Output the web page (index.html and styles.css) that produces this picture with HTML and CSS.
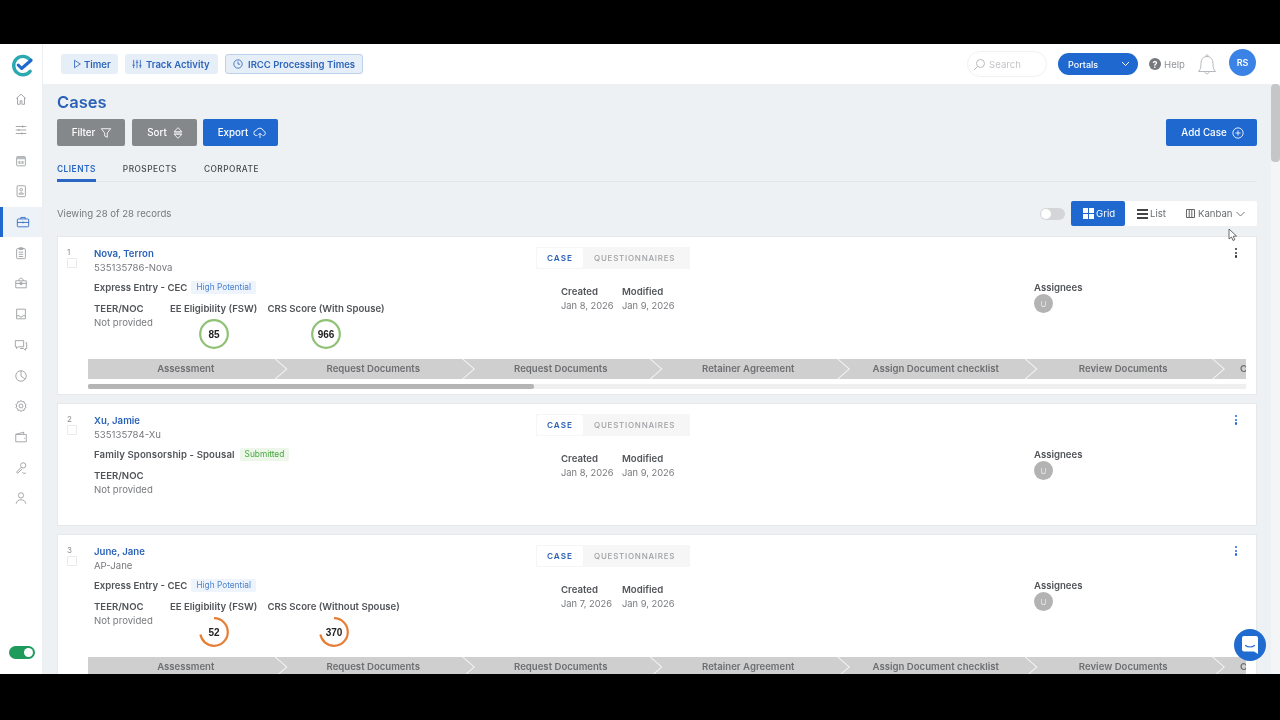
FILE: index.html
```html
<!DOCTYPE html>
<html lang="en">
<head>
<meta charset="utf-8">
<title>Cases</title>
<link rel="stylesheet" href="styles.css">
</head>
<body>
<div class="app">
  <aside class="sidebar">
    <div class="logo">
      <svg width="23" height="23" viewBox="0 0 24 24" fill="none"><path d="M19.5 5.600A9.600 9.600 0 1 0 20 18" stroke="#2aa9b0" stroke-width="3.600" stroke-linecap="round"/><path d="M7.500 11.500l3.600 3.600L21 6.500" stroke="#1f68d0" stroke-width="3.200" stroke-linecap="round" stroke-linejoin="round"/></svg>
    </div>
    <nav class="nav">
      <a class="nav-item"><svg viewBox="0 0 16 16"><path d="M2.500 7.500L8 2.500l5.500 5M4 6.500V14h3v-4h2v4h3V6.500"/></svg></a>
      <a class="nav-item"><svg viewBox="0 0 16 16"><path d="M2 4h12M2 8h12M2 12h12M10 2.800v2.400M5.500 6.800v2.400M9 10.800v2.400"/></svg></a>
      <a class="nav-item"><svg viewBox="0 0 16 16"><rect x="3" y="3" width="10" height="10.500" rx="1"/><path class="fill" d="M3 3h10v3H3zM5 8h2.500v3.500H5zM8.500 8H11v3.500H8.500z"/></svg></a>
      <a class="nav-item"><svg viewBox="0 0 16 16"><rect x="3.500" y="2" width="9.500" height="12.500" rx="1"/><circle cx="8.200" cy="6.500" r="1.500"/><path d="M5.500 11.500c.4-2 5-2 5.400 0z"/></svg></a>
      <a class="nav-item active"><svg viewBox="0 0 16 16"><rect x="1.500" y="4.500" width="13" height="9" rx="1"/><path d="M5.500 4.500V2.800h5v1.700M1.500 8.500h13M8 7.500v2"/></svg></a>
      <a class="nav-item"><svg viewBox="0 0 16 16"><rect x="3" y="3" width="10" height="11.500" rx="1"/><path d="M6 2h4v2H6zM5.500 7h5M5.500 9.500h5M5.500 12h5"/></svg></a>
      <a class="nav-item"><svg viewBox="0 0 16 16"><path d="M2 5.500h12v8H2zM5.500 5.500c0-4 5-4 5 0M2 8.500h12"/><circle cx="8" cy="8.500" r="1.500"/></svg></a>
      <a class="nav-item"><svg viewBox="0 0 16 16"><path d="M3 2.500h10v11H3zM3 10h3l1 1.500h2l1-1.500h3"/></svg></a>
      <a class="nav-item"><svg viewBox="0 0 16 16"><path d="M1.500 3h9.500v7H5l-2 2v-2H1.500zM13 5.500h1.500V12H13v2l-2-2H7"/></svg></a>
      <a class="nav-item"><svg viewBox="0 0 16 16"><circle cx="8" cy="8" r="6"/><path d="M8 2v6l4.500 3.500"/></svg></a>
      <a class="nav-item"><svg viewBox="0 0 16 16"><path d="M8 1.500l1.300 1.800 2.200-.4.400 2.200 2 1.100L12.800 8l1.100 1.800-2 1.100-.4 2.200-2.200-.4L8 14.500l-1.300-1.800-2.200.4-.4-2.200-2-1.100L3.200 8 2.100 6.200l2-1.100.4-2.200 2.200.4z"/><circle cx="8" cy="8" r="2.200"/></svg></a>
      <a class="nav-item"><svg viewBox="0 0 16 16"><path d="M2 5l9-2.500V5M2 5h12v8.500H2zM11.500 9.500h1"/></svg></a>
      <a class="nav-item"><svg viewBox="0 0 16 16"><circle cx="10.500" cy="5" r="3"/><path d="M8.500 7L3 12.500 4 14l5.500-5M9.500 13c1 1.500 3 1.500 4 .5"/></svg></a>
      <a class="nav-item"><svg viewBox="0 0 16 16"><circle cx="8" cy="5" r="3"/><path d="M2.500 14.500c.5-6 10.500-6 11 0"/></svg></a>
    </nav>
    <div class="side-toggle"><span class="side-knob"></span></div>
  </aside>
  <div class="workspace">
    <header class="topbar">
      <div class="quick">
        <a class="quick-btn timer"><svg class="qi" viewBox="0 0 12 12"><path d="M3 1.500v9l7-4.500z"/></svg>Timer</a>
        <a class="quick-btn track"><svg class="qi" viewBox="0 0 12 12"><path d="M2 1v10M6 1v10M10 1v10M.5 7.500h3M4.500 4h3M8.500 8h3"/></svg>Track Activity</a>
        <a class="quick-btn outlined"><svg class="qi" viewBox="0 0 12 12"><circle cx="6" cy="6" r="5"/><path d="M6 3v3.200h2.500"/></svg>IRCC Processing Times</a>
      </div>
      <div class="top-right">
        <div class="search"><svg width="13" height="13" viewBox="0 0 13 13" fill="none" stroke="#bbb"><circle cx="7.500" cy="5.500" r="4"/><path d="M4.500 8.500L1 12"/></svg><span>Search</span></div>
        <div class="portals"><span>Portals</span><svg width="9" height="6" viewBox="0 0 9 6" fill="none" stroke="#fff"><path d="M1 1l3.500 3.500L8 1"/></svg></div>
        <div class="help"><span class="help-icon">?</span>Help</div>
        <svg class="bell" width="20" height="24" viewBox="0 0 20 24" fill="none" stroke="#b5b8bc"><path d="M1.500 19.500c2-2 2.500-4 2.500-8C4 7 6.500 4.500 10 4.500s6 2.500 6 7c0 4 .5 6 2.500 8zM8.500 4.500c0-2 3-2 3 0M8 19.500c0 3 4 3 4 0"/></svg>
        <div class="avatar">RS</div>
      </div>
    </header>
    <div class="body-row">
      <main class="content">
        <h1 class="title">Cases</h1>
        <div class="toolbar">
          <a class="btn grey filter">Filter<svg viewBox="0 0 14 14"><path d="M1.500 2h11L8.500 7v5l-3-1.500V7z"/></svg></a>
          <a class="btn grey sort">Sort<svg viewBox="0 0 14 14"><path d="M7 .800L2.500 5.500h9zM7 13.200L2.500 8.500h9zM2.500 7h9"/></svg></a>
          <a class="btn blue export">Export<svg class="wide" viewBox="0 0 16 14"><path d="M5 10H4a3 3 0 0 1-.4-6A4.500 4.500 0 0 1 12 4.500 2.800 2.800 0 0 1 12 10h-1M8 13V7.500M5.800 9.500L8 7.300l2.200 2.200"/></svg></a>
          <a class="btn blue add">Add Case<svg viewBox="0 0 14 14"><circle cx="7" cy="7" r="6"/><path d="M7 4v6M4 7h6"/></svg></a>
        </div>
        <div class="tabs">
          <a class="tab current">CLIENTS</a>
          <a class="tab">PROSPECTS</a>
          <a class="tab">CORPORATE</a>
        </div>
        <div class="records">
          <span class="count">Viewing 28 of 28 records</span>
          <div class="switch"><span class="switch-knob"></span></div>
          <div class="views">
            <a class="view on"><svg width="11" height="11" viewBox="0 0 11 11" fill="#fff"><path d="M0 0h5v5H0zM6 0h5v5H6zM0 6h5v5H0zM6 6h5v5H6z"/></svg>Grid</a>
            <a class="view list"><svg width="11" height="10" viewBox="0 0 11 10" fill="#444"><path d="M0 0h11v2H0zM0 4h11v2H0zM0 8h11v2H0z"/></svg>List</a>
            <a class="view kanban"><svg width="9" height="9" viewBox="0 0 9 9" fill="none" stroke="#666"><path d="M.5.500h8v8h-8zM3.200.500v8M5.800.500v8"/></svg>Kanban<svg width="9" height="6" viewBox="0 0 9 6" fill="none" stroke="#777"><path d="M.5 1l4 4 4-4"/></svg></a>
          </div>
        </div>

        <article class="card">
          <div class="index"><span>1</span><i class="check"></i></div>
          <div class="card-body">
            <div class="card-top">
              <div class="person">
                <a class="name">Nova, Terron</a>
                <div class="ref">535135786-Nova</div>
                <div class="program"><b>Express Entry - CEC</b><span class="pill info">High Potential</span></div>
                <div class="metrics">
                  <div class="metric teer"><b>TEER/NOC</b><span>Not provided</span></div>
                  <div class="metric"><b>EE Eligibility (FSW)</b><svg class="ring" viewBox="0 0 30 30"><circle class="good" cx="15" cy="15" r="13.800"/><text x="15" y="18.500">85</text></svg></div>
                  <div class="metric"><b>CRS Score (With Spouse)</b><svg class="ring" viewBox="0 0 30 30"><circle class="good" cx="15" cy="15" r="13.800"/><text x="15" y="18.500">966</text></svg></div>
                </div>
              </div>
              <div class="meta">
                <div class="switcher"><span class="chip">CASE</span><span class="chip-off">QUESTIONNAIRES</span></div>
                <div class="dates"><div class="date"><b>Created</b><span>Jan 8, 2026</span></div><div class="date"><b>Modified</b><span>Jan 9, 2026</span></div></div>
              </div>
              <div class="assign"><b>Assignees</b><span class="user">U</span></div>
              <div class="menu dark"><i></i><i></i><i></i></div>
            </div>
            <div class="stages">
              <div class="stage">Assessment</div><div class="stage">Request Documents</div><div class="stage">Request Documents</div><div class="stage">Retainer Agreement</div><div class="stage">Assign Document checklist</div><div class="stage">Review Documents</div><div class="stage last">C</div>
            </div>
            <div class="hscroll"><div class="hthumb"></div></div>
          </div>
        </article>

        <article class="card short">
          <div class="index"><span>2</span><i class="check"></i></div>
          <div class="card-body">
            <div class="card-top">
              <div class="person">
                <a class="name">Xu, Jamie</a>
                <div class="ref">535135784-Xu</div>
                <div class="program family"><b>Family Sponsorship - Spousal</b><span class="pill ok">Submitted</span></div>
                <div class="metrics">
                  <div class="metric teer"><b>TEER/NOC</b><span>Not provided</span></div>
                </div>
              </div>
              <div class="meta">
                <div class="switcher"><span class="chip">CASE</span><span class="chip-off">QUESTIONNAIRES</span></div>
                <div class="dates"><div class="date"><b>Created</b><span>Jan 8, 2026</span></div><div class="date"><b>Modified</b><span>Jan 9, 2026</span></div></div>
              </div>
              <div class="assign"><b>Assignees</b><span class="user">U</span></div>
              <div class="menu"><i></i><i></i><i></i></div>
            </div>
          </div>
        </article>

        <article class="card">
          <div class="index"><span>3</span><i class="check"></i></div>
          <div class="card-body">
            <div class="card-top">
              <div class="person">
                <a class="name">June, Jane</a>
                <div class="ref">AP-Jane</div>
                <div class="program"><b>Express Entry - CEC</b><span class="pill info">High Potential</span></div>
                <div class="metrics">
                  <div class="metric teer"><b>TEER/NOC</b><span>Not provided</span></div>
                  <div class="metric"><b>EE Eligibility (FSW)</b><svg class="ring" viewBox="0 0 30 30"><circle class="low" pathLength="100" cx="15" cy="15" r="13.800"/><text x="15" y="18.500">52</text></svg></div>
                  <div class="metric"><b>CRS Score (Without Spouse)</b><svg class="ring" viewBox="0 0 30 30"><circle class="low" pathLength="100" cx="15" cy="15" r="13.800"/><text x="15" y="18.500">370</text></svg></div>
                </div>
              </div>
              <div class="meta">
                <div class="switcher"><span class="chip">CASE</span><span class="chip-off">QUESTIONNAIRES</span></div>
                <div class="dates"><div class="date"><b>Created</b><span>Jan 7, 2026</span></div><div class="date"><b>Modified</b><span>Jan 9, 2026</span></div></div>
              </div>
              <div class="assign"><b>Assignees</b><span class="user">U</span></div>
              <div class="menu"><i></i><i></i><i></i></div>
            </div>
            <div class="stages">
              <div class="stage">Assessment</div><div class="stage">Request Documents</div><div class="stage">Request Documents</div><div class="stage">Retainer Agreement</div><div class="stage">Assign Document checklist</div><div class="stage">Review Documents</div><div class="stage last">C</div>
            </div>
          </div>
        </article>
      </main>
      <div class="rail"><div class="rail-thumb"></div></div>
    </div>
  </div>
  <svg class="cursor" width="10" height="14" viewBox="0 0 10 14"><path d="M1 1v10l2.500-2 1.500 3.500 1.800-.8L5.300 8.300 8.500 8z" fill="#fff" stroke="#444" stroke-width=".8"/></svg>
  <a class="chat"><svg width="16" height="18" viewBox="0 0 16 18"><path d="M2 0h12a2 2 0 0 1 2 2v16l-4-2.500H2a2 2 0 0 1-2-2V2a2 2 0 0 1 2-2z" fill="#fff"/><path d="M3.500 9.500c2.500 2 6.500 2 9 0" fill="none" stroke="#1f6bd0" stroke-width="1.200" stroke-linecap="round"/></svg></a>
</div>
</body>
</html>
```

FILE: styles.css
```css
* { box-sizing: border-box; }
html, body { margin: 0; height: 720px; overflow: hidden; }
body { background: #000; padding-top: 44px; font-family: Inter, "Liberation Sans", sans-serif; font-size: 9.600px; color: #77797d; }
b { font-weight: 600; color: #515458; }
a { cursor: default; }

.app { position: relative; display: flex; height: 630px; width: 1280px; overflow: hidden; background: #eef1f4; filter: blur(.3px); }

.sidebar { width: 43px; flex: none; background: #fff; display: flex; flex-direction: column; border-right: 1px solid #eceef0; }
.logo { height: 40px; display: flex; align-items: center; justify-content: center; padding: 2px 0 0 2px; }
.nav { display: flex; flex-direction: column; }
.nav-item { height: 30.700px; display: flex; align-items: center; justify-content: center; }
.nav-item svg { width: 14px; height: 14px; fill: none; stroke: #999c9f; stroke-width: 1; }
.nav-item svg .fill { fill: #b9bcbf; stroke: none; }
.nav-item.active { background: #edf2f9; border-left: 3px solid #1f68d0; }
.nav-item.active svg { stroke: #2a67c4; }
.side-toggle { margin: auto 0 15px 9px; width: 26px; height: 13px; background: #1d9a5c; border-radius: 7px; display: flex; justify-content: flex-end; align-items: center; padding-right: 2px; }
.side-knob { width: 9px; height: 9px; border-radius: 50%; background: #fff; }

.workspace { flex: 1; min-width: 0; display: flex; flex-direction: column; }
.topbar { height: 40px; flex: none; background: #fff; display: flex; align-items: center; justify-content: space-between; padding: 0 24px 0 18px; }
.quick { display: flex; gap: 7px; }
.quick-btn { height: 20px; display: flex; align-items: center; gap: 4px; background: #e6eef8; border-radius: 3px; color: #2d66bb; font-weight: 600; font-size: 9.500px; white-space: nowrap; }
.quick-btn.timer { width: 57px; padding-left: 11px; gap: 2px; }
.quick-btn.track { width: 93px; padding-left: 7px; }
.quick-btn.outlined { width: 138px; border: 1px solid #bcd0ea; padding-left: 7px; gap: 5px; }
.qi { width: 10px; height: 10px; fill: none; stroke: #2d66bb; stroke-width: 1; flex: none; }
.top-right { display: flex; align-items: center; }
.search { width: 80px; height: 26px; border: 1px solid #f0f1f2; border-radius: 13px; display: flex; align-items: center; gap: 3px; padding-left: 5px; color: #c3c5c8; font-size: 9.600px; }
.portals { margin-left: 11px; width: 80px; height: 22px; background: #1f68d0; border-radius: 11px; display: flex; align-items: center; justify-content: space-between; padding: 0 8px 0 10px; color: #fff; font-size: 9px; font-weight: 500; }
.help { margin-left: 11px; display: flex; align-items: center; gap: 3px; color: #909397; font-size: 9.600px; }
.help-icon { width: 12px; height: 12px; border-radius: 50%; background: #77797c; color: #fff; font-size: 9px; font-weight: 700; display: flex; align-items: center; justify-content: center; }
.bell { margin-left: 12px; }
.avatar { margin-left: 12px; margin-top: -4px; width: 27px; height: 27px; border-radius: 50%; background: #3b82e6; color: #fff; font-size: 9px; font-weight: 600; display: flex; align-items: center; justify-content: center; }

.body-row { flex: 1; min-height: 0; display: flex; }
.content { flex: 1; min-width: 0; padding: 8px 14px 0; }
.rail { width: 9px; flex: none; background: #f4f5f6; }
.rail-thumb { height: 78px; background: #c4c6c8; border-radius: 4px; }

.title { margin: 0; font-size: 16.500px; line-height: 20px; font-weight: 600; color: #2a62b8; }
.toolbar { display: flex; gap: 7px; margin-top: 7px; }
.btn { height: 27px; display: flex; align-items: center; justify-content: center; gap: 5px; border-radius: 2px; color: #fff; font-size: 9.800px; font-weight: 500; }
.btn svg { width: 12px; height: 12px; fill: none; stroke: #fff; stroke-width: 1; flex: none; }
.btn svg.wide { width: 14px; }
.btn.grey { background: #85888b; }
.btn.blue { background: #1f68d0; }
.btn.filter { width: 68px; padding-left: 2px; }
.btn.sort { width: 65px; padding-left: 2px; }
.btn.export { width: 75px; margin-left: -1px; padding-left: 4px; }
.btn.add { width: 91px; margin-left: auto; padding-left: 2px; }
.tabs { display: flex; gap: 27px; margin-top: 12px; height: 24px; border-bottom: 1px solid #e3e6e9; }
.tab { height: 24px; font-size: 8.300px; font-weight: 500; letter-spacing: .5px; color: #45484c; padding-top: 6px; border-bottom: 3px solid transparent; }
.tab.current { color: #2a67c4; font-weight: 600; border-bottom-color: #2a67c4; }

.records { display: flex; align-items: center; margin-top: 19px; height: 25px; }
.count { font-size: 9.600px; color: #75787c; }
.switch { margin-left: auto; width: 25px; height: 12px; border-radius: 6px; background: #d3d5d8; padding: 1px; }
.switch-knob { display: block; width: 10px; height: 10px; background: #fff; border-radius: 50%; }
.views { margin-left: 6px; display: flex; height: 25px; width: 186px; background: #fff; border-radius: 2px; }
.view { flex: none; display: flex; align-items: center; gap: 3px; color: #6a6d71; font-size: 9.600px; }
.view.on { background: #1f68d0; color: #fff; width: 54px; padding-left: 12px; border-radius: 2px; gap: 2px; }
.view.list { width: 50px; padding-left: 12px; gap: 2px; }
.view.kanban { padding-left: 11px; }

.card { display: flex; background: #fff; border: 1px solid #e6e9ec; margin-top: 10px; padding: 9px 10px 6px 0; height: 159px; }
.card + .card { margin-top: 8px; }
.card.short { height: 123px; }
.index { width: 30px; flex: none; padding-left: 9px; font-size: 8px; color: #8a8d90; line-height: 10px; margin-top: 1px; }
.index span { display: block; }
.check { display: block; margin-top: 1px; width: 10px; height: 10px; border: 1px solid #e9eaec; border-radius: 1px; }
.card-body { flex: 1; min-width: 0; padding-top: 1px; }
.card-top { display: flex; height: 112px; }
.person { width: 448px; flex: none; padding-left: 6px; }
.name { display: block; line-height: 14px; font-weight: 600; font-size: 9.600px; color: #2a62b8; }
.ref { line-height: 14px; }
.program { display: flex; align-items: center; gap: 4px; margin-top: 5px; height: 14px; }
.program.family { gap: 5px; }
.program.family b { letter-spacing: .1px; }
.pill { height: 13px; line-height: 13px; padding: 0 5px; font-size: 8.300px; border-radius: 2px; }
.pill.info { background: #eef4fb; color: #4b82d0; }
.pill.ok { background: #ecf7ea; color: #46a63c; }
.metrics { display: flex; margin-top: 8px; }
.metric { display: flex; flex-direction: column; align-items: center; line-height: 14px; margin-right: 10px; white-space: nowrap; }
.metric.teer { align-items: flex-start; width: 66px; }
.ring { width: 30px; height: 30px; margin-top: 3px; }
.ring circle { fill: none; stroke-width: 2.200; }
.ring .good { stroke: #8fc274; }
.ring .low { stroke: #e57e36; stroke-dasharray: 72 100; transform: rotate(-90deg); transform-origin: 15px 15px; }
.ring text { font-family: "Liberation Sans Narrow", "Liberation Sans", sans-serif; font-size: 10px; font-weight: 700; text-anchor: middle; fill: #222; }

.meta { width: 498px; flex: none; }
.switcher { display: inline-flex; align-items: center; height: 22px; padding: 1px 15px 1px 1px; background: #f6f6f6; }
.chip { display: flex; align-items: center; width: 46px; height: 20px; justify-content: center; background: #fff; color: #2a62b8; font-size: 8.200px; font-weight: 600; letter-spacing: 1px; border-radius: 2px; }
.chip-off { margin-left: 11px; color: #a0a2a5; font-size: 8px; letter-spacing: .75px; font-weight: 500; }
.dates { display: flex; margin: 16px 0 0 25px; line-height: 14px; }
.date { width: 61px; display: flex; flex-direction: column; white-space: nowrap; font-size: 9.300px; }
.date b { font-size: 9.600px; }

.assign { flex: 1; display: flex; flex-direction: column; align-items: flex-start; margin-top: 34px; line-height: 14px; }
.user { margin-top: -1px; width: 19px; height: 19px; border-radius: 50%; background: #b3b3b3; color: #e6e6e6; font-size: 8px; display: flex; align-items: center; justify-content: center; }
.menu { width: 3px; margin: 1px 8px 0 0; display: flex; flex-direction: column; gap: 1.500px; flex: none; }
.menu i { display: block; width: 2.200px; height: 2.200px; border-radius: 50%; background: #1f68d0; }
.menu.dark i { background: #333; }

.stages { display: flex; overflow: hidden; height: 20px; background: #cfcfcf; padding-left: 4px; }
.stage { position: relative; flex: none; width: 187.500px; text-align: center; line-height: 20px; font-size: 9.600px; font-weight: 600; color: #6d6f72; white-space: nowrap; }
.stage.last { width: 30px; text-align: left; padding-left: 23px; }
.stage.last::after { display: none; }
.stage::after { content: ""; position: absolute; top: 0; right: -8px; width: 13px; height: 20px; background: #f4f4f4; clip-path: polygon(0 0, 1.500px 0, 100% 50%, 1.500px 100%, 0 100%, calc(100% - 1.500px) 50%); }
.hscroll { margin-top: 5px; height: 5px; background: #efefef; }
.hthumb { width: 446px; height: 5px; background: #b5b5b5; border-radius: 2px; }

.cursor { position: absolute; left: 1228px; top: 184px; }
.chat { position: absolute; left: 1234px; top: 585px; width: 32px; height: 32px; border-radius: 50%; background: #1f6bd0; display: flex; align-items: center; justify-content: center; }
```
